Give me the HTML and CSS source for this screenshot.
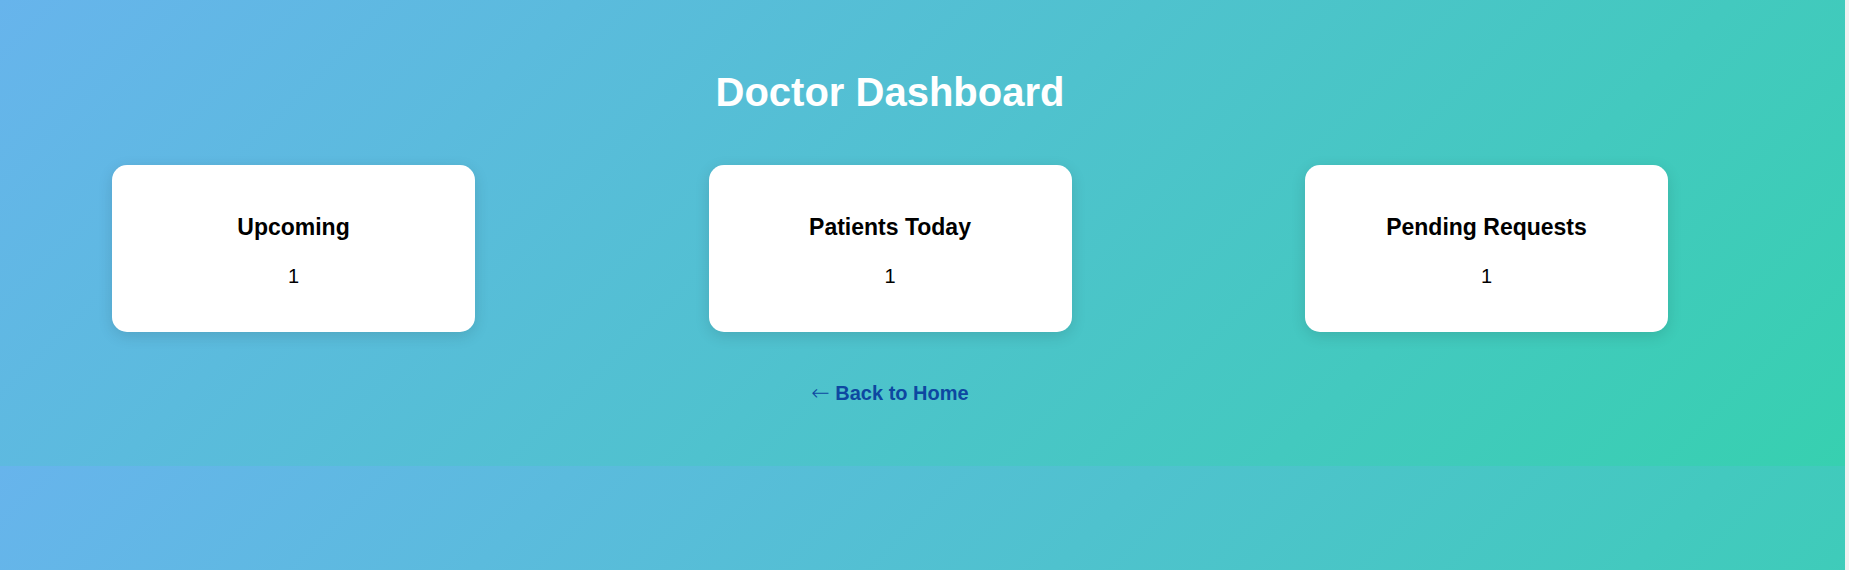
FILE: index.html
```html
<!DOCTYPE html>
<html lang="en">
<head>
<meta charset="utf-8">
<title>Doctor Dashboard</title>
<link rel="stylesheet" href="styles.css">
</head>
<body>
  <section class="dashboard">
    <h1 class="dashboard-title">Doctor Dashboard</h1>
    <div class="stats">
      <div class="stat-card">
        <h3 class="stat-label">Upcoming</h3>
        <p class="stat-value">1</p>
      </div>
      <div class="stat-card">
        <h3 class="stat-label">Patients Today</h3>
        <p class="stat-value">1</p>
      </div>
      <div class="stat-card">
        <h3 class="stat-label">Pending Requests</h3>
        <p class="stat-value">1</p>
      </div>
    </div>
    <div class="back">
      <a class="back-link" href="#"><span class="back-arrow">&larr;</span> Back to Home</a>
    </div>
  </section>
  <div class="scroll-strip"></div>
</body>
</html>
```

FILE: styles.css
```css
html {
  margin-right: 4px;
}

body {
  margin: 0;
  font-family: "Liberation Sans", Arial, sans-serif;
  background: linear-gradient(135deg, #67b4ec 0%, #37d0b0 100%);
  color: #000;
}

.scroll-strip {
  position: fixed;
  top: 0;
  right: 0;
  width: 4px;
  height: 100vh;
  background: #f1f1f1;
}

.dashboard {
  padding: 40px 177px 60px 112px;
  text-align: center;
}

.dashboard-title {
  margin: 30px 0 50px;
  font-size: 40px;
  font-weight: 700;
  color: #fff;
}

.stats {
  display: grid;
  grid-template-columns: repeat(3, 363px);
  justify-content: space-between;
}

.stat-card {
  background: #fff;
  border-radius: 15px;
  box-shadow: 0 4px 15px rgba(0, 0, 0, 0.12);
  padding: 26px 20px 0;
  height: 167px;
  box-sizing: border-box;
}

.stat-label {
  margin: 23px 0 24px;
  font-size: 23px;
  font-weight: 700;
}

.stat-value {
  margin: 0;
  font-size: 20px;
}

.back {
  margin-top: 50px;
  line-height: 23px;
}

.back-link {
  font-size: 20px;
  font-weight: 700;
  color: #0d47a1;
  text-decoration: none;
}

.back-arrow {
  font-family: "DejaVu Sans", sans-serif;
  font-weight: 200;
  font-size: 22px;
  line-height: 1;
}
```
